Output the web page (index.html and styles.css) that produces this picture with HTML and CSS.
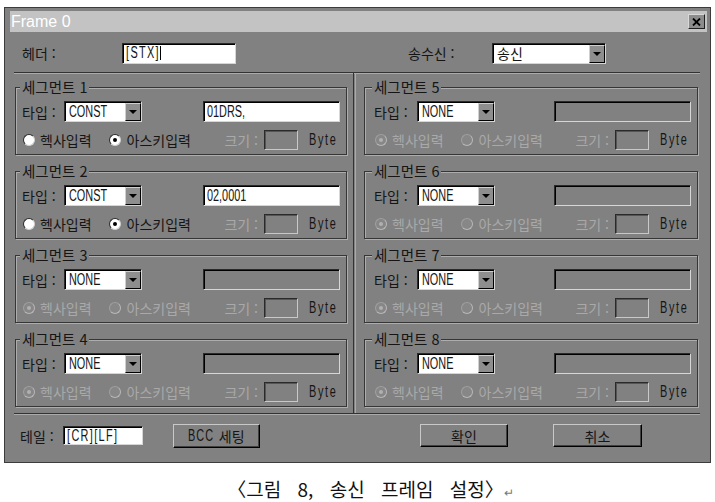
FILE: index.html
```html
<!DOCTYPE html>
<html lang="ko">
<head>
  <meta charset="UTF-8">
  <title>Frame 0</title>
  <link rel="stylesheet" href="styles.css">
</head>
<body>

<div class="window">
  <div class="title-bar">
    <span class="title">Frame 0</span>
    <span class="close-btn">
      <svg width="9" height="8" viewBox="0 0 9 8"><path d="M1 0.5 L8 7.5 M8 0.5 L1 7.5" stroke="#000" stroke-width="1.8"/></svg>
    </span>
  </div>

  <div class="header-row">
    <span class="lbl head-lbl">헤더 :</span>
    <div class="edit head-edit"><span class="narrow wide">[STX]</span><span class="caret"></span></div>
    <span class="lbl dir-lbl">송수신 :</span>
    <div class="combo dir-combo"><span class="combo-text">송신</span><span class="combo-btn"></span></div>
  </div>

  <div class="panel">
    <div class="col">
      <fieldset class="seg">
        <legend>세그먼트 1</legend>
        <div class="seg-row">
          <span class="lbl type-lbl">타입 :</span>
          <div class="combo type-combo"><span class="combo-text"><span class="narrow">CONST</span></span><span class="combo-btn"></span></div>
          <div class="edit data-edit"><span class="narrow">01DRS,</span></div>
        </div>
        <div class="seg-row opt-row">
          <span class="radio"></span><span class="opt">헥사입력</span>
          <span class="radio on"></span><span class="opt">아스키입력</span>
          <span class="size-lbl">크기 :</span>
          <div class="size-box"></div>
          <span class="byte"><span class="narrow">Byte</span></span>
        </div>
      </fieldset>

      <fieldset class="seg">
        <legend>세그먼트 2</legend>
        <div class="seg-row">
          <span class="lbl type-lbl">타입 :</span>
          <div class="combo type-combo"><span class="combo-text"><span class="narrow">CONST</span></span><span class="combo-btn"></span></div>
          <div class="edit data-edit"><span class="narrow">02,0001</span></div>
        </div>
        <div class="seg-row opt-row">
          <span class="radio"></span><span class="opt">헥사입력</span>
          <span class="radio on"></span><span class="opt">아스키입력</span>
          <span class="size-lbl">크기 :</span>
          <div class="size-box"></div>
          <span class="byte"><span class="narrow">Byte</span></span>
        </div>
      </fieldset>

      <fieldset class="seg off">
        <legend>세그먼트 3</legend>
        <div class="seg-row">
          <span class="lbl type-lbl">타입 :</span>
          <div class="combo type-combo"><span class="combo-text"><span class="narrow">NONE</span></span><span class="combo-btn"></span></div>
          <div class="edit data-edit"></div>
        </div>
        <div class="seg-row opt-row">
          <span class="radio on"></span><span class="opt">헥사입력</span>
          <span class="radio"></span><span class="opt">아스키입력</span>
          <span class="size-lbl">크기 :</span>
          <div class="size-box"></div>
          <span class="byte"><span class="narrow">Byte</span></span>
        </div>
      </fieldset>

      <fieldset class="seg off">
        <legend>세그먼트 4</legend>
        <div class="seg-row">
          <span class="lbl type-lbl">타입 :</span>
          <div class="combo type-combo"><span class="combo-text"><span class="narrow">NONE</span></span><span class="combo-btn"></span></div>
          <div class="edit data-edit"></div>
        </div>
        <div class="seg-row opt-row">
          <span class="radio on"></span><span class="opt">헥사입력</span>
          <span class="radio"></span><span class="opt">아스키입력</span>
          <span class="size-lbl">크기 :</span>
          <div class="size-box"></div>
          <span class="byte"><span class="narrow">Byte</span></span>
        </div>
      </fieldset>
    </div>

    <div class="divider"></div>

    <div class="col">
      <fieldset class="seg off">
        <legend>세그먼트 5</legend>
        <div class="seg-row">
          <span class="lbl type-lbl">타입 :</span>
          <div class="combo type-combo"><span class="combo-text"><span class="narrow">NONE</span></span><span class="combo-btn"></span></div>
          <div class="edit data-edit"></div>
        </div>
        <div class="seg-row opt-row">
          <span class="radio on"></span><span class="opt">헥사입력</span>
          <span class="radio"></span><span class="opt">아스키입력</span>
          <span class="size-lbl">크기 :</span>
          <div class="size-box"></div>
          <span class="byte"><span class="narrow">Byte</span></span>
        </div>
      </fieldset>

      <fieldset class="seg off">
        <legend>세그먼트 6</legend>
        <div class="seg-row">
          <span class="lbl type-lbl">타입 :</span>
          <div class="combo type-combo"><span class="combo-text"><span class="narrow">NONE</span></span><span class="combo-btn"></span></div>
          <div class="edit data-edit"></div>
        </div>
        <div class="seg-row opt-row">
          <span class="radio on"></span><span class="opt">헥사입력</span>
          <span class="radio"></span><span class="opt">아스키입력</span>
          <span class="size-lbl">크기 :</span>
          <div class="size-box"></div>
          <span class="byte"><span class="narrow">Byte</span></span>
        </div>
      </fieldset>

      <fieldset class="seg off">
        <legend>세그먼트 7</legend>
        <div class="seg-row">
          <span class="lbl type-lbl">타입 :</span>
          <div class="combo type-combo"><span class="combo-text"><span class="narrow">NONE</span></span><span class="combo-btn"></span></div>
          <div class="edit data-edit"></div>
        </div>
        <div class="seg-row opt-row">
          <span class="radio on"></span><span class="opt">헥사입력</span>
          <span class="radio"></span><span class="opt">아스키입력</span>
          <span class="size-lbl">크기 :</span>
          <div class="size-box"></div>
          <span class="byte"><span class="narrow">Byte</span></span>
        </div>
      </fieldset>

      <fieldset class="seg off">
        <legend>세그먼트 8</legend>
        <div class="seg-row">
          <span class="lbl type-lbl">타입 :</span>
          <div class="combo type-combo"><span class="combo-text"><span class="narrow">NONE</span></span><span class="combo-btn"></span></div>
          <div class="edit data-edit"></div>
        </div>
        <div class="seg-row opt-row">
          <span class="radio on"></span><span class="opt">헥사입력</span>
          <span class="radio"></span><span class="opt">아스키입력</span>
          <span class="size-lbl">크기 :</span>
          <div class="size-box"></div>
          <span class="byte"><span class="narrow">Byte</span></span>
        </div>
      </fieldset>
    </div>
  </div>

  <div class="footer-row">
    <span class="lbl tail-lbl">테일 :</span>
    <div class="edit tail-edit"><span class="narrow wide">[CR][LF]</span></div>
    <div class="btn bcc-btn"><span class="narrow bcc">BCC</span>세팅</div>
    <div class="btn ok-btn">확인</div>
    <div class="btn cancel-btn">취소</div>
  </div>
</div>

<p class="caption">〈그림 8, 송신 프레임 설정〉<span class="ret">↵</span></p>

</body>
</html>
```

FILE: styles.css
```css
* {
  box-sizing: border-box;
}

html, body {
  margin: 0;
  padding: 0;
}

body {
  background: #fff;
  font-family: "Noto Sans CJK KR", sans-serif;
  font-size: 14px;
  color: #151515;
}

/* bitmap-like condensed latin */
.narrow {
  display: inline-block;
  font-family: "Liberation Sans", sans-serif;
  font-size: 16px;
  line-height: 18px;
  transform: scaleX(0.68);
  transform-origin: 0 50%;
  white-space: nowrap;
}

.narrow.wide {
  letter-spacing: 2px;
}

.window {
  margin: 7px 0 0 4px;
  width: 707px;
  height: 456px;
  background: #818181;
  border: 1px solid #3c3c3c;
  padding: 3px 3px 0 5px;
}

.title-bar {
  height: 21px;
  background: #c3c3c3;
  display: flex;
  align-items: center;
  justify-content: space-between;
  padding: 0 2px 0 1px;
}

.title {
  font-family: "Liberation Sans", sans-serif;
  font-size: 16px;
  color: #fff;
}

.close-btn {
  width: 17px;
  height: 15px;
  background: #8c8c8c;
  border: 1px solid;
  border-color: #d8d8d8 #202020 #202020 #d8d8d8;
  display: flex;
  align-items: center;
  justify-content: center;
}

.lbl {
  line-height: 20px;
  white-space: nowrap;
}

/* header */
.header-row {
  margin-top: 11px;
  height: 20px;
  display: flex;
  align-items: center;
}

.head-lbl {
  margin-left: 12px;
  width: 100px;
}

.head-edit {
  width: 114px;
  height: 20px;
}

.head-edit .narrow {
  margin-right: -16px;
}

.caret {
  width: 1px;
  height: 14px;
  background: #000;
}

.dir-lbl {
  margin-left: 172px;
  width: 84px;
}

.dir-combo {
  width: 114px;
  height: 20px;
}

/* fields */
.edit {
  height: 21px;
  background: #fff;
  border: 1px solid;
  border-color: #2a2a2a #d6d6d6 #d6d6d6 #2a2a2a;
  box-shadow: inset 1px 1px 0 #000;
  padding-left: 3px;
  display: flex;
  align-items: center;
  white-space: nowrap;
}

.combo {
  height: 21px;
  display: flex;
  background: #fff;
  border: 1px solid;
  border-color: #2a2a2a #d6d6d6 #d6d6d6 #2a2a2a;
  box-shadow: inset 1px 1px 0 #000;
}

.combo-text {
  flex: 1;
  padding-left: 4px;
  display: flex;
  align-items: center;
  white-space: nowrap;
}

.combo-btn {
  width: 16px;
  margin: 1px 0 0;
  background: #8e8e8e;
  border: 1px solid;
  border-color: #cfcfcf #000 #000 #cfcfcf;
  display: flex;
  align-items: center;
  justify-content: center;
}

.combo-btn::after {
  content: "";
  border-left: 4px solid transparent;
  border-right: 4px solid transparent;
  border-top: 4px solid #000;
}

/* segment panel */
.panel {
  margin: 9px 7px 0 4px;
  display: grid;
  grid-template-columns: 332px 17px 1fr;
  padding: 6px 2px 6px 1px;
  border-top: 1px solid #333;
  border-bottom: 1px solid #333;
  box-shadow: inset 0 1px 0 #ababab, 0 1px 0 #ababab;
}

.col {
  display: flex;
  flex-direction: column;
  gap: 8px;
}

.divider {
  margin: -6px 0 -6px 6px;
  width: 3px;
  border-left: 1px solid #333;
  border-right: 1px solid #ababab;
}

.seg {
  margin: 0;
  min-width: 0;
  height: 76px;
  padding: 6px 6px 4px 6px;
  border: 1px solid #363636;
  box-shadow: inset 1px 1px 0 #adadad, 1px 1px 0 #adadad;
}

.seg legend {
  margin-left: -2px;
  padding: 0 2px;
  line-height: 16px;
  font-size: 14.5px;
  background: #818181;
}

.col + .divider + .col .seg {
  padding-left: 9px;
}

.col + .divider + .col .type-lbl {
  width: 43px;
}

.seg-row {
  height: 21px;
  display: flex;
  align-items: center;
}

.opt-row {
  margin-top: 7px;
}

.type-lbl {
  width: 42px;
}

.type-combo {
  width: 78px;
}

.data-edit {
  margin-left: auto;
  width: 137px;
}

.radio {
  width: 12px;
  height: 12px;
  margin-left: 1px;
  border-radius: 50%;
  background: #fff;
  border: 1px solid;
  border-color: #2a2a2a #d0d0d0 #d0d0d0 #2a2a2a;
  display: flex;
  align-items: center;
  justify-content: center;
}

.radio.on::after {
  content: "";
  width: 4px;
  height: 4px;
  border-radius: 50%;
  background: #000;
}

.opt {
  margin-left: 5px;
  white-space: nowrap;
}

.opt + .radio {
  margin-left: 17px;
}

.radio + .opt + .radio + .opt {
  margin-left: 6px;
}

.size-lbl {
  margin-left: auto;
  color: #a9a9a9;
  white-space: nowrap;
}

.size-box {
  margin-left: 6px;
  width: 34px;
  height: 20px;
  border: 1px solid;
  border-color: #2a2a2a #c8c8c8 #c8c8c8 #2a2a2a;
  box-shadow: inset 1px 1px 0 #555;
}

.byte {
  margin: 0 1px 0 11px;
  width: 30px;
  display: flex;
  align-items: center;
}

.byte .narrow {
  letter-spacing: 2.5px;
}

.off .data-edit {
  background: #818181;
}

.off .opt {
  color: #a9a9a9;
}

.off .radio {
  background: #878787;
  border-color: #a0a0a0 #b8b8b8 #b8b8b8 #a0a0a0;
}

.off .radio.on::after {
  background: #b0b0b0;
}

/* footer */
.footer-row {
  margin-top: 9px;
  height: 25px;
  display: flex;
  align-items: center;
}

.tail-lbl {
  margin-left: 10px;
  width: 43px;
}

.tail-edit {
  width: 80px;
  height: 19px;
}

.btn {
  display: flex;
  align-items: center;
  justify-content: center;
  height: 23px;
  background: #818181;
  border: 1px solid;
  border-color: #c8c8c8 #000 #000 #c8c8c8;
  box-shadow: inset -1px -1px 0 #404040;
  white-space: nowrap;
}

.bcc {
  letter-spacing: 1.5px;
  margin-right: -8px;
}

.bcc-btn {
  margin-left: 30px;
  width: 87px;
  height: 24px;
}

.ok-btn {
  margin-left: 160px;
  width: 88px;
}

.cancel-btn {
  margin-left: 45px;
  width: 89px;
}

.caption {
  margin: 14px 0 0;
  padding-left: 26px;
  text-align: center;
  font-size: 19px;
  line-height: 24px;
  color: #111;
  word-spacing: 11px;
}

.ret {
  font-size: 12px;
  color: #777;
  word-spacing: 0;
}
```
